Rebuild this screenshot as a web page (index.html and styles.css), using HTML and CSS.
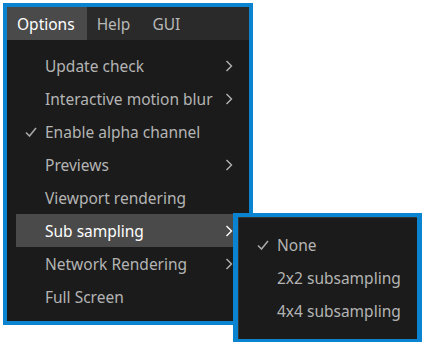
FILE: index.html
```html
<!DOCTYPE html>
<html>
  <head>
    <title>Options menu</title>
    <link rel="stylesheet" href="styles.css">
  </head>
  <body>
    <div class="window">
      <div class="menubar">
        <div class="menubar-item active">Options</div>
        <div class="menubar-item">Help</div>
        <div class="menubar-item">GUI</div>
      </div>
      <div class="dropdown">
        <div class="item">
          <span class="check"></span>
          <span class="label">Update check</span>
          <svg class="arrow" width="8" height="12" viewBox="0 0 8 12"><polyline points="1.5 1 6.5 6 1.5 11" /></svg>
        </div>
        <div class="item">
          <span class="check"></span>
          <span class="label">Interactive motion blur</span>
          <svg class="arrow" width="8" height="12" viewBox="0 0 8 12"><polyline points="1.5 1 6.5 6 1.5 11" /></svg>
        </div>
        <div class="item">
          <span class="check">
            <svg width="12" height="10" viewBox="0 0 12 10"><polyline points="1 5.5 4.5 9 11 1" /></svg>
          </span>
          <span class="label">Enable alpha channel</span>
        </div>
        <div class="item">
          <span class="check"></span>
          <span class="label">Previews</span>
          <svg class="arrow" width="8" height="12" viewBox="0 0 8 12"><polyline points="1.5 1 6.5 6 1.5 11" /></svg>
        </div>
        <div class="item">
          <span class="check"></span>
          <span class="label">Viewport rendering</span>
        </div>
        <div class="item selected">
          <span class="check"></span>
          <span class="label">Sub sampling</span>
          <svg class="arrow" width="8" height="12" viewBox="0 0 8 12"><polyline points="1.5 1 6.5 6 1.5 11" /></svg>
        </div>
        <div class="item">
          <span class="check"></span>
          <span class="label">Network Rendering</span>
          <svg class="arrow" width="8" height="12" viewBox="0 0 8 12"><polyline points="1.5 1 6.5 6 1.5 11" /></svg>
        </div>
        <div class="item">
          <span class="check"></span>
          <span class="label">Full Screen</span>
        </div>
      </div>
    </div>
    <div class="submenu">
      <div class="item">
        <span class="check">
          <svg width="12" height="10" viewBox="0 0 12 10"><polyline points="1 5.5 4.5 9 11 1" /></svg>
        </span>
        <span class="label">None</span>
      </div>
      <div class="item">
        <span class="check"></span>
        <span class="label">2x2 subsampling</span>
      </div>
      <div class="item">
        <span class="check"></span>
        <span class="label">4x4 subsampling</span>
      </div>
    </div>
  </body>
</html>
```

FILE: styles.css
```css
body {
  margin: 0;
  background: #ffffff;
  font-family: "Noto Sans", "Open Sans", sans-serif;
  font-size: 15.5px;
  position: relative;
  height: 342px;
  overflow: hidden;
}
.window {
  margin: 3px;
  width: 242px;
  height: 314px;
  border: 4px solid #0a84d0;
  background: #1b1b1b;
  display: flex;
  flex-direction: column;
}
.menubar {
  height: 33px;
  background: #2a2a2a;
  display: flex;
  align-items: stretch;
}
.menubar-item {
  display: flex;
  align-items: center;
  padding: 0 12px 0 10px;
  color: #b8b8b8;
}
.menubar-item.active {
  background: #4a4a4a;
  color: #ffffff;
}
.dropdown {
  padding: 9px 0 0 9px;
  display: flex;
  flex-direction: column;
}
.item {
  height: 33px;
  display: flex;
  align-items: center;
  color: #b4b4b4;
}
.dropdown .item {
  width: 224px;
}
.item.selected {
  background: #4a4a4a;
  color: #ffffff;
}
.check {
  width: 29px;
  display: flex;
  justify-content: center;
}
.check svg {
  fill: none;
  stroke: #a8a8a8;
  stroke-width: 1.6;
}
.label {
  flex: 1;
}
.arrow {
  fill: none;
  stroke: #b4b4b4;
  stroke-width: 1.4;
  margin-right: 7px;
}
.item.selected .arrow {
  stroke: #ffffff;
}
.submenu {
  position: absolute;
  left: 233px;
  top: 213px;
  width: 179px;
  height: 111px;
  border: 5px solid #0a84d0;
  border-top-width: 4px;
  border-bottom-width: 4px;
  background: #1b1b1b;
  box-shadow: inset 1px 1px 0 #333333;
  padding-top: 11px;
  display: flex;
  flex-direction: column;
}
.submenu .item {
  padding-left: 10px;
}
.submenu .check {
  width: 29px;
}
```
